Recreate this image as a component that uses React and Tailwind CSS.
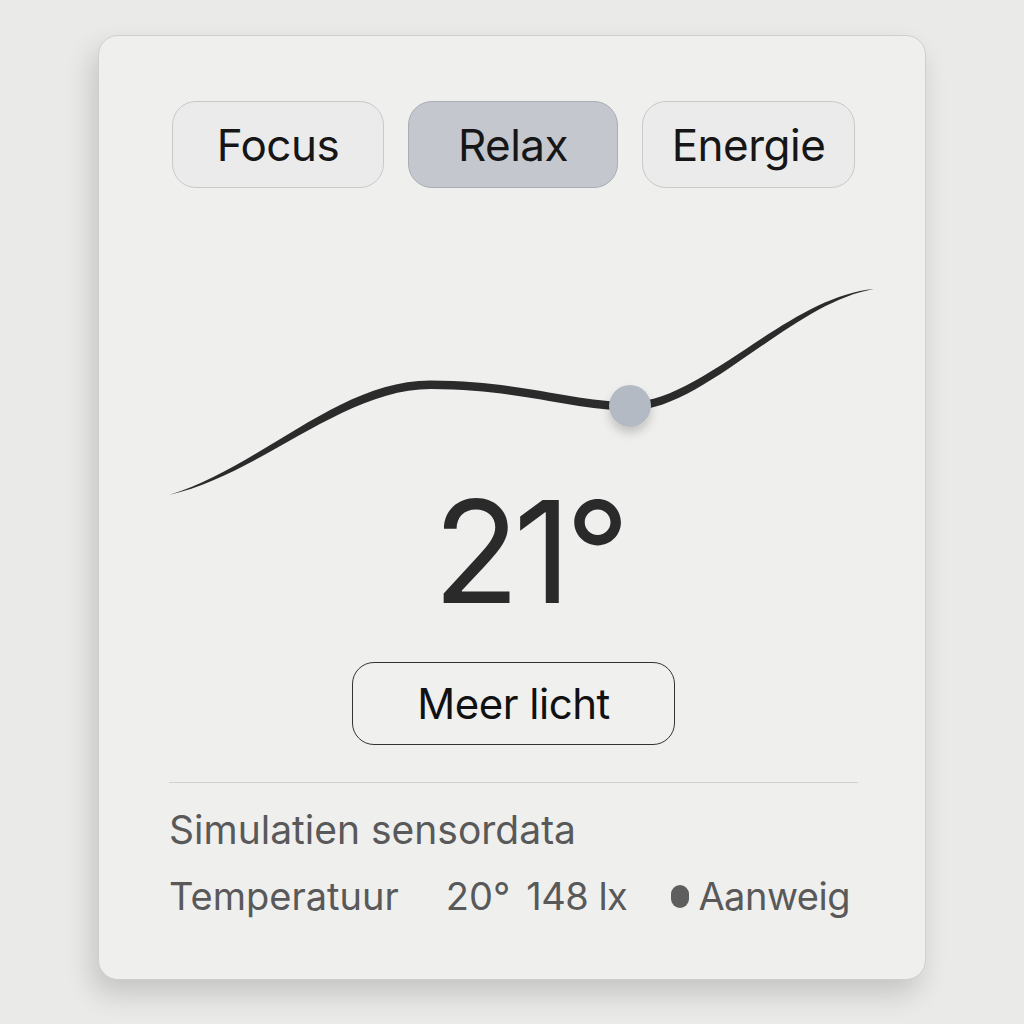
export default function App() {
  const modes = [
    { label: "Focus", active: false, w: "w-[212px]" },
    { label: "Relax", active: true, w: "w-[210px]" },
    { label: "Energie", active: false, w: "w-[213px]" },
  ];

  return (
    <div
      className="w-[1024px] h-[1024px] bg-[#eaeae9] pt-[35px] pl-[98px]"
      style={{ fontFamily: "Inter, 'Noto Sans', sans-serif" }}
    >
      <div className="w-[828px] h-[945px] rounded-[20px] bg-[#efefee] border border-[#cfcfcd] shadow-[-6px_14px_28px_rgba(0,0,0,0.16)] pl-[70px] pr-[67px] pt-[65px] flex flex-col">
        {/* mode selector */}
        <div className="flex gap-[24px] ml-[3px]">
          {modes.map((m) => (
            <button
              key={m.label}
              className={`${m.w} h-[87px] rounded-[24px] border flex items-center justify-center text-[44px] tracking-[-0.5px] text-[#161616] ${
                m.active
                  ? "bg-[#c4c7cd] border-[#a9adb4]"
                  : "bg-[#ebebeb] border-[#c9c9c9]"
              }`}
            >
              {m.label}
            </button>
          ))}
        </div>

        {/* curve */}
        <svg
          className="mt-[82px] ml-[-5px] overflow-visible"
          width="720"
          height="230"
          viewBox="163 270 720 230"
        >
          <defs>
            <filter id="knobShadow" x="-50%" y="-50%" width="200%" height="200%">
              <feDropShadow dx="0" dy="6" stdDeviation="5" floodColor="#000" floodOpacity="0.18" />
            </filter>
          </defs>
          <path
            d="M168,495 C260,467 338,380 430,380.5 C520,381 570,401.5 629,402 C700,402.5 788,296 873,289 C790,303 702,411 629,410.5 C570,410 520,389.5 430,389 C342,389 262,473 168,495 Z"
            fill="#2b2b2b"
          />
          <circle cx="629" cy="406" r="21" fill="#b4bac3" filter="url(#knobShadow)" />
        </svg>

        {/* temperature */}
        <div className="flex justify-center -mt-[24px] pl-[30px]">
          <span className="text-[142px] leading-[150px] text-[#2a2a2a] tracking-[-6px]">21°</span>
        </div>

        {/* action */}
        <div className="flex justify-center mt-[36px]">
          <button className="w-[323px] h-[83px] rounded-[22px] border border-[#333] bg-[#f0f0ef] text-[42px] tracking-[-0.5px] text-[#111]">
            Meer licht
          </button>
        </div>

        <div className="mt-[37px] h-px bg-[#d0d0ce]" />

        {/* sensor data */}
        <div className="mt-[24px] text-[39px] text-[#595959] leading-[46px] whitespace-nowrap">
          Simulatien sensordata
        </div>
        <div className="mt-[20px] flex items-center text-[38px] text-[#595959] leading-[46px] whitespace-nowrap">
          <span>Temperatuur</span>
          <span className="ml-[47px]">20°</span>
          <span className="ml-[16px] tracking-[-0.5px]">148 lx</span>
          <span className="ml-[44px] shrink-0 w-[18px] h-[23px] rounded-full bg-[#5e5e5e] mr-[9px]" />
          <span className="tracking-[-0.5px]">Aanweig</span>
        </div>
      </div>
    </div>
  );
}
